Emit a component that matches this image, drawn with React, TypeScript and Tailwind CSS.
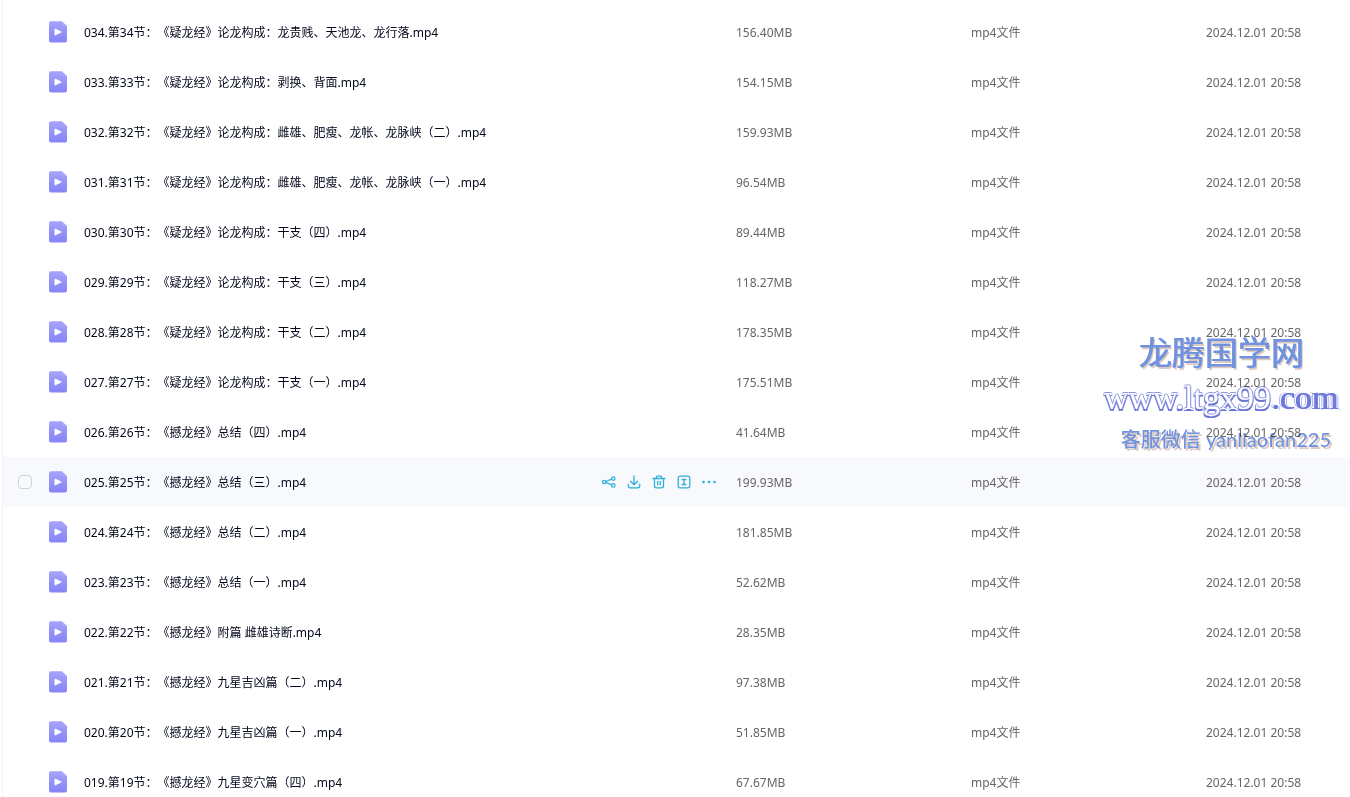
interface VideoFile {
  name: string;
  size: string;
}

const FILE_TYPE = "mp4文件";
const MODIFIED = "2024.12.01 20:58";
const ACTIVE_INDEX = 9;

const files: VideoFile[] = [
  { name: "034.第34节：《疑龙经》论龙构成：龙贵贱、天池龙、龙行落.mp4", size: "156.40MB" },
  { name: "033.第33节：《疑龙经》论龙构成：剥换、背面.mp4", size: "154.15MB" },
  { name: "032.第32节：《疑龙经》论龙构成：雌雄、肥瘦、龙帐、龙脉峡（二）.mp4", size: "159.93MB" },
  { name: "031.第31节：《疑龙经》论龙构成：雌雄、肥瘦、龙帐、龙脉峡（一）.mp4", size: "96.54MB" },
  { name: "030.第30节：《疑龙经》论龙构成：干支（四）.mp4", size: "89.44MB" },
  { name: "029.第29节：《疑龙经》论龙构成：干支（三）.mp4", size: "118.27MB" },
  { name: "028.第28节：《疑龙经》论龙构成：干支（二）.mp4", size: "178.35MB" },
  { name: "027.第27节：《疑龙经》论龙构成：干支（一）.mp4", size: "175.51MB" },
  { name: "026.第26节：《撼龙经》总结（四）.mp4", size: "41.64MB" },
  { name: "025.第25节：《撼龙经》总结（三）.mp4", size: "199.93MB" },
  { name: "024.第24节：《撼龙经》总结（二）.mp4", size: "181.85MB" },
  { name: "023.第23节：《撼龙经》总结（一）.mp4", size: "52.62MB" },
  { name: "022.第22节：《撼龙经》附篇 雌雄诗断.mp4", size: "28.35MB" },
  { name: "021.第21节：《撼龙经》九星吉凶篇（二）.mp4", size: "97.38MB" },
  { name: "020.第20节：《撼龙经》九星吉凶篇（一）.mp4", size: "51.85MB" },
  { name: "019.第19节：《撼龙经》九星变穴篇（四）.mp4", size: "67.67MB" },
];

function VideoIcon() {
  return (
    <svg className="h-[22px] w-5 shrink-0" viewBox="0 0 20 22" aria-hidden="true">
      <defs>
        <linearGradient id="video-fill" x1="0" y1="0" x2="0" y2="1">
          <stop offset="0" stopColor="#a5a3fa" />
          <stop offset="1" stopColor="#8684f6" />
        </linearGradient>
      </defs>
      <path
        d="M3 0.300h10.800l5.200 5V19.500a2 2 0 0 1-2 2H3a2 2 0 0 1-2-2V2.300a2 2 0 0 1 2-2z"
        fill="url(#video-fill)"
      />
      <path d="M13.800 0.300L19 5.300h-3.700a1.500 1.500 0 0 1-1.500-1.500z" fill="#a8a6fa" />
      <path d="M7 8v6l6.200-3z" fill="#fff" stroke="#fff" strokeWidth="1" strokeLinejoin="round" />
    </svg>
  );
}

function ShareIcon() {
  return (
    <>
      <circle cx="2.300" cy="7" r="1.700" />
      <circle cx="11.300" cy="3.600" r="1.700" />
      <circle cx="11.300" cy="10.400" r="1.700" />
      <path d="M4 6.500L9.600 4.100M4 7.500L9.600 9.900" />
    </>
  );
}

function DownloadIcon() {
  return <path d="M7 1v8.500M3.500 6.300L7 9.700l3.500-3.400M1.300 9.500v1.300a2 2 0 0 0 2 2h7.400a2 2 0 0 0 2-2V9.500" />;
}

function TrashIcon() {
  return <path d="M1 3.500h12M4.300 3.300V2.200a1 1 0 0 1 1-1h3.400a1 1 0 0 1 1 1v1.100M2.500 3.500v7.300a2 2 0 0 0 2 2h5a2 2 0 0 0 2-2V3.500M5.700 6.300v3.500M8.300 6.300v3.500" />;
}

function RenameIcon() {
  return (
    <>
      <rect x="1.200" y="1.200" width="11.600" height="11.600" rx="1.800" />
      <path d="M5.200 4.500h3.600M5.200 9.500h3.600M7 4.500v5" />
    </>
  );
}

function MoreIcon() {
  return (
    <g fill="currentColor" stroke="none">
      <circle cx="1.500" cy="7" r="1.300" />
      <circle cx="7" cy="7" r="1.300" />
      <circle cx="12.500" cy="7" r="1.300" />
    </g>
  );
}

const actions = [
  { label: "分享", Icon: ShareIcon },
  { label: "下载", Icon: DownloadIcon },
  { label: "删除", Icon: TrashIcon },
  { label: "重命名", Icon: RenameIcon },
  { label: "更多", Icon: MoreIcon },
];

function RowActions() {
  return (
    <div className="flex shrink-0 gap-[11px]">
      {actions.map(({ label, Icon }) => (
        <button key={label} type="button" aria-label={label} className="cursor-pointer text-[#2fb0d8]">
          <svg
            className="size-[14px]"
            viewBox="0 0 14 14"
            fill="none"
            stroke="currentColor"
            strokeWidth="1.300"
            strokeLinecap="round"
            strokeLinejoin="round"
          >
            <Icon />
          </svg>
        </button>
      ))}
    </div>
  );
}

function FileRow({ file, active }: { file: VideoFile; active: boolean }) {
  return (
    <tr className={`h-[50px] ${active ? "bg-[#f7f9fd]" : "bg-white"}`}>
      <td className="p-0">
        <div className="flex items-center pr-5 pl-[15px]">
          <input
            type="checkbox"
            aria-label={file.name}
            className={`size-[14px] shrink-0 appearance-none rounded-[4px] border border-[#d0d2d8] ${
              active ? "" : "opacity-0"
            }`}
          />
          <span className="ml-4">
            <VideoIcon />
          </span>
          <span className="ml-4 flex-1 truncate pt-[2px] text-[#03081a]">{file.name}</span>
          {active && <RowActions />}
        </div>
      </td>
      <td className="pt-[2px]">{file.size}</td>
      <td className="pt-[2px]">{FILE_TYPE}</td>
      <td className="pt-[2px]">{MODIFIED}</td>
    </tr>
  );
}

function Watermark() {
  return (
    <div className="pointer-events-none absolute top-[330px] right-[9px] flex w-[240px] flex-col items-center whitespace-nowrap mix-blend-multiply">
      <p className="text-[33px] leading-[46px] text-[#7092e0] [text-shadow:1px_0_0_#7092e0,2px_2px_0_#dccabf]">
        龙腾国学网
      </p>
      <p className="font-['Liberation_Serif',serif] text-[34px] leading-[44px] text-white [text-shadow:1px_0_0_#8f98e2,-1px_0_0_#8f98e2,0_-1px_0_#8f98e2,-1px_2px_0_#6a74d4,1px_2px_0_#6a74d4]">
        www.ltgx99
        <span className="text-[#6f79da] [text-shadow:1px_0_0_#6f79da,-1px_-1px_0_#fff,-2px_-1px_0_#aeb6ee,2px_1px_0_#fff,3px_1px_0_#aeb6ee]">
          .com
        </span>
      </p>
      <p className="self-end pr-[10px] font-['Lato','Noto_Sans_CJK_SC',sans-serif] text-[20px] leading-[38px] font-medium text-[#7092e0] [text-shadow:2px_2px_0_#dccabf]">
        客服微信 yanliaofan225
      </p>
    </div>
  );
}

export default function App() {
  return (
    <main className="relative h-screen overflow-hidden bg-white pl-[2px] font-['Noto_Sans','Noto_Sans_CJK_SC',sans-serif] text-[12px] leading-[18px] text-[#666] [text-spacing-trim:space-all]">
      <div className="border-l border-[#f0f0f3] pt-[7px]">
        <table className="w-full table-fixed border-collapse text-left">
          <colgroup>
            <col />
            <col className="w-[235px]" />
            <col className="w-[235px]" />
            <col className="w-[144px]" />
          </colgroup>
          <tbody>
            {files.map((file, index) => (
              <FileRow key={file.name} file={file} active={index === ACTIVE_INDEX} />
            ))}
          </tbody>
        </table>
      </div>
      <Watermark />
    </main>
  );
}
